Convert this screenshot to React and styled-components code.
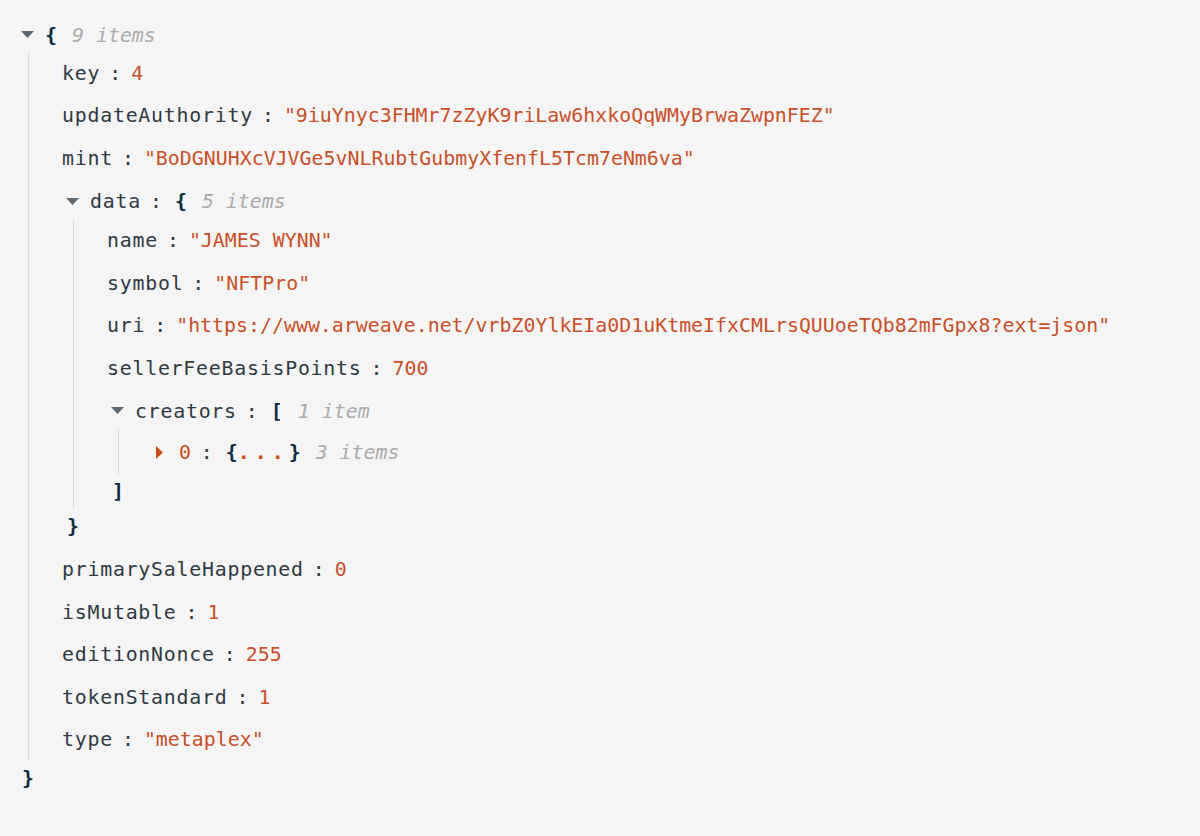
import React from "react";
import styled, { createGlobalStyle } from "styled-components";

const GlobalStyle = createGlobalStyle`
  html, body {
    margin: 0;
    padding: 0;
    background: #f5f5f5;
  }
`;

const tree = {
  kind: "object",
  count: "9 items",
  children: [
    { key: "key", value: "4" },
    { key: "updateAuthority", value: '"9iuYnyc3FHMr7zZyK9riLaw6hxkoQqWMyBrwaZwpnFEZ"' },
    { key: "mint", value: '"BoDGNUHXcVJVGe5vNLRubtGubmyXfenfL5Tcm7eNm6va"' },
    {
      key: "data",
      kind: "object",
      count: "5 items",
      tail: 4,
      children: [
        { key: "name", value: '"JAMES WYNN"' },
        { key: "symbol", value: '"NFTPro"' },
        {
          key: "uri",
          value: '"https://www.arweave.net/vrbZ0YlkEIa0D1uKtmeIfxCMLrsQUUoeTQb82mFGpx8?ext=json"',
        },
        { key: "sellerFeeBasisPoints", value: "700" },
        {
          key: "creators",
          kind: "array",
          count: "1 item",
          children: [{ key: "0", kind: "object", collapsed: true, count: "3 items" }],
        },
      ],
    },
    { key: "primarySaleHappened", value: "0" },
    { key: "isMutable", value: "1" },
    { key: "editionNonce", value: "255" },
    { key: "tokenStandard", value: "1" },
    { key: "type", value: '"metaplex"' },
  ],
};

const Viewer = styled.div`
  padding: 13px 0 40px 17px;
  font-family: "DejaVu Sans Mono", "Liberation Mono", monospace;
  font-size: 19.9px;
  color: #2f3a42;
`;

const Row = styled.div`
  display: flex;
  align-items: center;
  height: 42.6px;
  white-space: pre;
`;

const Header = styled(Row)`
  height: ${(p) => p.$h || 35.5}px;
  padding: ${(p) => p.$top ?? 4}px 0 0 4px;
`;

const Closing = styled(Row)`
  height: 35px;
  padding-left: 5px;
  margin-bottom: ${(p) => p.$tail || 0}px;
`;

const Children = styled.div`
  margin-left: 11px;
  border-left: 1px solid #dadada;
  padding-left: 33px;
`;

const Caret = styled.svg`
  flex: none;
  margin-right: ${(p) => (p.$open ? 11 : 16)}px;
  fill: ${(p) => (p.$open ? "#5d6870" : "#cb4b16")};
`;

const Key = styled.span`
  letter-spacing: 0.75px;
  color: ${(p) => (p.$index ? "#cb4b16" : "#2f3a42")};
`;

const Colon = styled.span`
  margin: 0 10px 0 9px;
  color: #2f3a42;
`;

const Value = styled.span`
  color: #c8502a;
`;

const Brace = styled.span`
  margin-left: ${(p) => (p.$open ? 3 : 0)}px;
  color: #0c2c42;
  font-weight: bold;
`;

const Dots = styled.span`
  letter-spacing: 5px;
  color: #cb4b16;
  font-weight: bold;
`;

const Count = styled.span`
  margin-left: 15px;
  color: #ababab;
  font-style: italic;
`;

const DownCaret = () => (
  <Caret $open width="13" height="8" viewBox="0 0 13 8">
    <polygon points="0,0 13,0 6.5,7" />
  </Caret>
);

const RightCaret = () => (
  <Caret width="7" height="13" viewBox="0 0 7 13">
    <polygon points="0,0 7,6.5 0,13" />
  </Caret>
);

const Label = ({ name, index }) =>
  name !== undefined ? (
    <>
      <Key $index={index}>{name}</Key>
      <Colon>:</Colon>
    </>
  ) : null;

const Node = ({ node, root }) => {
  const open = node.kind === "array" ? "[" : "{";
  const close = node.kind === "array" ? "]" : "}";
  const index = /^\d+$/.test(node.key || "");

  if (!node.kind) {
    return (
      <Row>
        <Label name={node.key} />
        <Value>{node.value}</Value>
      </Row>
    );
  }

  if (node.collapsed) {
    return (
      <Header $h={42.6} $top={2.5}>
        <RightCaret />
        <Label name={node.key} index={index} />
        <Brace $open>{open}</Brace>
        <Dots>...</Dots>
        <Brace>{close}</Brace>
        <Count>{node.count}</Count>
      </Header>
    );
  }

  return (
    <div>
      <Header $h={root ? 34 : 35.5} $top={root ? 5 : 4}>
        <DownCaret />
        <Label name={node.key} index={index} />
        <Brace $open={!root}>{open}</Brace>
        <Count>{node.count}</Count>
      </Header>
      <Children>
        {node.children.map((c, i) => (
          <Node key={i} node={c} />
        ))}
      </Children>
      <Closing $tail={node.tail}>
        <Brace>{close}</Brace>
      </Closing>
    </div>
  );
};

export default function App() {
  return (
    <>
      <GlobalStyle />
      <Viewer>
        <Node node={tree} root />
      </Viewer>
    </>
  );
}
